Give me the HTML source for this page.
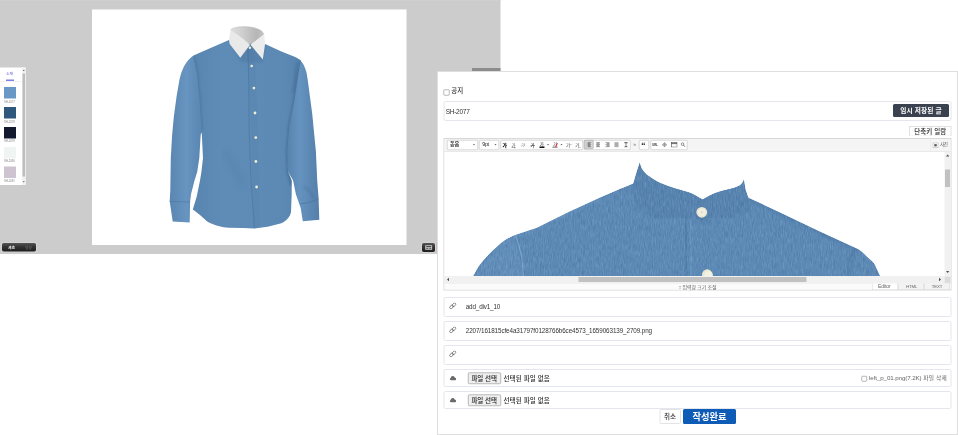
<!DOCTYPE html>
<html lang="ko">
<head>
<meta charset="utf-8">
<title>SH-2077</title>
<style>
html,body{margin:0;padding:0;background:#fff;overflow:hidden}
body{width:958px;height:435px;position:relative}
#s{position:absolute;left:0;top:0;width:1916px;height:870px;transform:scale(.5);transform-origin:0 0;
  font-family:"Liberation Sans","Noto Sans CJK KR",sans-serif;font-size:12px;color:#333;line-height:1}
#s *{box-sizing:border-box}
#s div,#s span,#s svg{position:absolute}
#gray{left:0;top:0;width:1001px;height:508px;background:#ccc;border-top:2px solid #d0d0d0}
#frame{left:183.5px;top:18.5px;width:629.5px;height:471.5px;background:#fff}
#shirt{left:184px;top:18px;width:629px;height:472px}
/* swatch panel */
#sw{left:0;top:135px;width:51px;height:235px;background:#fff}
#sw .t{left:12px;font-size:7.8px;color:#6464e0;white-space:nowrap;top:8.5px}
#sw .u{left:12px;top:24px;width:16px;height:3px;background:#8080e6}
#sw .l{left:0;top:27px;width:44px;height:1px;background:#e2e2e2}
#sw .c{left:8px;width:24px;height:23px}
#sw .n{left:8px;font-size:5.6px;color:#888;white-space:nowrap;letter-spacing:-.1px}
#sw .sb{left:44px;top:0;width:7px;height:235px;background:#f1f1f1}
#sw .th{left:45px;top:12px;width:5px;height:206px;background:#bdbdbd}
/* dark buttons */
.dk{background:linear-gradient(#555,#333 45%,#1e1e1e);border-radius:3.5px;box-shadow:0 0 0 1.5px rgba(255,255,255,.22)}
#b1{left:4px;top:486px;width:68px;height:17px}
#b1 span{font-size:7.5px;font-weight:bold;top:4.5px;white-space:nowrap}
#b2{left:843.5px;top:485.5px;width:26.5px;height:18px}
#bar{left:944px;top:136px;width:57px;height:7px;background:#8c8c8c}
#red{left:873px;top:486px;width:1.5px;height:17px;background:#d9a0a0}
/* panel */
#panel{left:874px;top:142px;width:1042px;height:728px;background:#fff;border:2px solid #dedede}
#pc{left:0;top:0;width:1916px;height:870px}
.tx{white-space:nowrap;color:#333}
.cb{width:12px;height:12px;border:1.7px solid #707070;border-radius:2.2px;background:#fff}
.k{font-weight:500;color:#2a2a2a}
.box{left:887px;width:1016px;border:2px solid #e3e6ec;border-radius:4px;background:#fff}
#tmp{left:1786px;top:208px;width:112px;height:26px;background:#3a414f;border-radius:3px}
#tmp span{left:0;width:112px;text-align:center;top:5.5px;font-size:13.4px;font-weight:bold;color:#fff;white-space:nowrap;letter-spacing:.2px}
#sk{left:1818px;top:251.5px;width:85px;height:20.5px;overflow:hidden;border:2px solid #e2e2e2;border-bottom:1px solid #eee;background:#fff}
#sk span{left:0;width:81px;text-align:center;top:3px;font-size:13px;color:#222;white-space:nowrap;letter-spacing:.1px;font-weight:500}
#ed{left:886.5px;top:275.5px;width:1016.5px;height:305px;border:2px solid #d8d8d8;background:#fff}
#tb{left:0;top:0;width:1012.5px;height:26px;background:#f5f5f5;border-bottom:1.5px solid #dcdcdc}
#tb .sel,#tb .grp{top:2.5px;height:19.5px;border:1.4px solid #b6b6b6;border-radius:2px;background:#fff}
#tb .sel span{font-size:10.5px;color:#222;font-weight:500;white-space:nowrap;letter-spacing:-.5px}
#tb i{top:7px;width:0;height:0;border-left:2.5px solid transparent;border-right:2.5px solid transparent;border-top:3px solid #666;position:absolute}
#tb .grp b{top:4.5px;font-weight:normal;font-size:9px;color:#222;width:16px;text-align:center;white-space:nowrap;position:absolute;line-height:1}
#tb .grp b sup,#tb .grp b sub{font-size:5px;line-height:0}
#tb .grp u{position:absolute;top:12px;width:10px;height:3.4px}
#tb .grp em{position:absolute;left:110px;top:5px;width:2px;height:8px;background:#d22;transform:rotate(28deg)}
#tb .grp .on{background:#d4d4d4;border:1.4px solid #9a9a9a;border-radius:2px}
#tb .al{top:3px;width:10px;height:11px}
#ct{left:0;top:26px;width:1000px;height:249.5px;background:#fff;overflow:hidden}
#eshirt{left:0;top:0;width:1000px;height:249px}
#vs{left:1000px;top:26px;width:12.5px;height:249.5px;background:#f1f1f1}
#hs{left:0;top:274.5px;width:1000px;height:14px;background:#f1f1f1}
#vs .th,#hs .th{background:#c1c1c1}
#cn{left:1000px;top:275px;width:12.5px;height:14px;background:#dcdcdc}
#rs{left:0;top:289px;width:1012.5px;height:12.5px;background:#fbfbfb;border-top:1px solid #e4e4e4}
#rs .tab{top:-.5px;height:12.5px;border:1.5px solid #d5d5d5;border-top:none;background:#f3f3f3}
#rs .tab span{top:1.5px;font-size:9px;color:#666;white-space:nowrap;letter-spacing:-.2px}
.lk{left:897.5px;width:15px;height:13.4px}
.fb{left:935.5px;width:66.5px;height:22.5px;border:1.5px solid #7d7d7d;border-radius:3px;background:#efefef}
.fb span{left:0;width:63.5px;text-align:center;top:3.5px;font-size:13px;color:#111;white-space:nowrap;letter-spacing:-.1px;font-weight:500}
#cancel{left:1318.5px;top:817.5px;width:43px;height:30px;border:2px solid #e4e4e4;border-radius:3px;background:#fff}
#cancel span{left:0;width:39px;text-align:center;top:6px;font-size:13px;color:#333;white-space:nowrap;letter-spacing:-.1px;font-weight:500}
#done{left:1366px;top:817.5px;width:106px;height:30px;background:#0f5cb6;border-radius:3px}
#done span{left:0;width:106px;text-align:center;top:6.5px;font-size:18.5px;font-weight:bold;color:#fff;white-space:nowrap;letter-spacing:-.1px}

</style>
</head>
<body>
<div id="s">
<div id="gray"></div>
<div id="frame"></div>
<svg id="shirt" viewBox="92 8.5 314.5 236" preserveAspectRatio="none">
<defs>
  <linearGradient id="gT" x1="0" y1="0" x2="1" y2="0">
    <stop offset="0" stop-color="#5885af"/><stop offset=".25" stop-color="#5e8cb7"/><stop offset=".62" stop-color="#5d8bb6"/><stop offset=".85" stop-color="#5b89b4"/><stop offset="1" stop-color="#5884ae"/>
  </linearGradient>
  <linearGradient id="gL" x1="0" y1="0" x2="1" y2="0">
    <stop offset="0" stop-color="#5a86b1"/><stop offset=".5" stop-color="#6794c0"/><stop offset="1" stop-color="#5885b0"/>
  </linearGradient>
  <linearGradient id="gR" x1="0" y1="0" x2="1" y2="0">
    <stop offset="0" stop-color="#5582ac"/><stop offset=".4" stop-color="#6593bf"/><stop offset="1" stop-color="#547faa"/>
  </linearGradient>
  <linearGradient id="gC" x1="0" y1="0" x2="1" y2="0">
    <stop offset="0" stop-color="#dedede"/><stop offset=".35" stop-color="#cfcfcf"/><stop offset=".78" stop-color="#b6b6b6"/><stop offset="1" stop-color="#c4c4c4"/>
  </linearGradient>
  <filter id="bl1" x="-20%" y="-20%" width="140%" height="140%"><feGaussianBlur stdDeviation="1.2"/></filter>
  <filter id="bl2" x="-20%" y="-20%" width="140%" height="140%"><feGaussianBlur stdDeviation="2.5"/></filter>
  <clipPath id="cpT"><path id="pT" d="M229,39.5 L215.2,45.5 L201.4,51.4 L193.1,55.2 L197.2,75 L199.3,95.7 L200.7,116.4 L201.6,130 L203,157.6 L201.4,171.4 L200,180 L196.6,196.6 L192.8,209 C197,212 203,217 206.9,220.7 C212,224 220,226.5 229,227.2 L242.8,227.6 L254.5,228 L267.6,226.2 L281.4,222.8 C287,220 290,216 291,211.7 L291.7,193.8 L291.7,180 L288.1,171.2 L287.3,151 L289.4,125.6 L294.4,100.3 L298.2,75 L300.7,60 L295.2,56.6 L281.4,51 L265.1,43.4 L250,40 Z"/></clipPath>
</defs>
<!-- left sleeve -->
<path d="M193.1,55.2 C186.2,60.7 182.1,66.9 179.3,80 L176.6,95.7 L173.8,116.4 L172.1,135 L170.8,157.6 L170.3,190 L169.7,200.7 L172.7,221.1 L189.7,222.1 L190.1,201.4 L191,193.8 L194.5,180 L197.2,171.4 L199.3,157.6 L200.7,134 L203,130 L202,95 L199,60 Z" fill="url(#gL)"/>
<path d="M169.7,200.9 L190.1,201.6" stroke="#4f769d" stroke-width=".6" fill="none"/>
<!-- right sleeve -->
<path d="M296,56.9 C301,59 304.5,64 306.5,72 L307.8,80 L312.2,113 L315.9,151 L317.2,180 L318.6,197.9 L319.3,219.3 L302.8,220.7 L300.7,207.6 L295.9,193.8 L293.1,180 L288.1,171.2 L286,151 L288,125.6 L293,100.3 L296,75 Z" fill="url(#gR)"/>
<path d="M300.3,203 C306,203.5 313,201 318.6,198.2" stroke="#4a7098" stroke-width=".6" fill="none"/>
<path d="M304,186 C308,188 312,193 314,199" stroke="#4a7098" stroke-width="2.2" fill="none" opacity=".45" filter="url(#bl1)"/>
<!-- torso -->
<use href="#pT" fill="url(#gT)"/>
<g clip-path="url(#cpT)">
  <path d="M193.1,55.2 L197.2,75 L199.3,95.7 L200.7,116.4 L201.6,130" stroke="#456b93" stroke-width="2.4" fill="none" opacity=".55" filter="url(#bl1)"/>
  <path d="M300.7,60 L298.2,75 L294.4,100.3 L289.4,125.6 L287.3,151 L288.1,171.2 L291.7,185" stroke="#40658c" stroke-width="3" fill="none" opacity=".6" filter="url(#bl1)"/>
  <path d="M250,46 L252,70 L254,112 L255.5,160 L256.5,228" stroke="#4f769d" stroke-width="7" fill="none" opacity=".1"/>
  <path d="M247.8,44 L248.6,75 L249.2,130 L251,180 L254.5,228" stroke="#486e96" stroke-width=".7" fill="none" opacity=".7"/>
  <path d="M225,150 C232,165 238,175 244,185" stroke="#4b7199" stroke-width="8" fill="none" opacity=".12" filter="url(#bl2)"/>
  <path d="M297,62 C295,72 296,82 292,92" stroke="#3f648b" stroke-width="2" fill="none" opacity=".45" filter="url(#bl1)"/>
  <path d="M232,44 L241,62 L262,62 L266,44Z" fill="#3d628a" opacity=".22" filter="url(#bl1)"/>
</g>
<!-- collar -->
<path d="M230.6,29.3 C233.5,26.7 239,26.1 245,26.1 C252,26.2 259,28.2 262.1,31 L264.1,33.8 L253,43 L249.9,43.4 L247.5,42.5 Z" fill="url(#gC)" stroke="#b4b4b4" stroke-width=".35"/>
<path d="M230.6,29.2 C235.5,32.6 243,38 248.3,42.6 L249.9,44.5 L240.3,57.2 L229.7,43.4 L229,39.3 Z" fill="#e9e9e9"/>
<path d="M264.1,33.6 L265.1,43.4 L262.8,58.9 L250.5,44.3 L252.5,42.6 C256,40 261,36.5 264.1,33.6 Z" fill="#ececec"/>
<!-- buttons -->
<g fill="#f1ecd2">
<circle cx="249.9" cy="47.3" r="1.25"/><circle cx="251.7" cy="65.5" r="1.3"/><circle cx="253.9" cy="87.6" r="1.35"/><circle cx="255" cy="112.5" r="1.4"/><circle cx="255.8" cy="137.1" r="1.4"/><circle cx="255.9" cy="161" r="1.4"/><circle cx="256.6" cy="186.5" r="1.4"/>
</g>

</svg>
<div id="sw">
  <span class="t">소재</span><div class="u"></div><div class="l"></div>
  <div class="c" style="top:39px;background:#6a98c6"></div><span class="n" style="top:66px">SH-2077</span>
  <div class="c" style="top:79px;background:#2f587c"></div><span class="n" style="top:105.5px">SH-2078</span>
  <div class="c" style="top:118.5px;background:#131a30"></div><span class="n" style="top:145px">SH-2079</span>
  <div class="c" style="top:158.5px;background:#f0f5f3"></div><span class="n" style="top:185px">SH-2080</span>
  <div class="c" style="top:198px;background:#cdc3d1"></div><span class="n" style="top:224.5px">SH-2081</span>
  <div class="sb"></div><div class="th"></div>
  <svg style="left:44px;top:2px;width:7px;height:7px" viewBox="0 0 7 7"><path d="M1.5 4.8L3.5 2.4L5.5 4.8Z" fill="#555"/></svg>
  <svg style="left:44px;top:225px;width:7px;height:7px" viewBox="0 0 7 7"><path d="M1.5 2.4L3.5 4.8L5.5 2.4Z" fill="#555"/></svg>
</div>
<div id="b1" class="dk"><span style="left:12px;color:#fff">셔츠</span><span style="left:46px;color:#5e5e5e">정장</span></div>
<div id="b2" class="dk"><svg style="left:6px;top:4px;width:15px;height:10px" viewBox="0 0 15 10"><rect x=".5" y=".5" width="14" height="9" rx="1" fill="#cfcfcf"/><rect x="2.5" y="2.2" width="10" height="2" fill="#3a3a3a"/><rect x="2.5" y="5.6" width="4" height="2.2" fill="#555"/><rect x="8.5" y="5.6" width="4" height="2.2" fill="#555"/></svg></div>
<div id="bar"></div>
<div id="red"></div>
<div id="panel"></div>
<div id="pc">
<div class="cb" style="left:886.5px;top:179px"></div>
<span class="tx k" style="left:902.5px;top:174px;font-size:13px;letter-spacing:-.2px">공지</span>
<div class="box" style="top:202px;height:40px"></div>
<span class="tx" style="left:891.5px;top:217px;font-size:13px;letter-spacing:-.55px">SH-2077</span>
<div id="tmp"><span>임시 저장된 글</span></div>
<div id="sk"><span>단축키 일람</span></div>
<!-- editor -->
<div id="ed">
  <div id="tb">
    <div class="sel" style="left:5.5px;width:61.5px"><span style="left:5px;top:2px">돋움</span><i style="left:51px"></i></div>
    <div class="sel" style="left:69px;width:40.5px"><span style="left:6px;top:1.5px">9pt</span><i style="left:30.5px"></i></div>
    <div class="grp" style="left:112.5px;width:165px">
      <b style="left:-.8px;font-weight:900;color:#000;font-size:9.5px">가</b><b style="left:17.2px;text-decoration:underline;color:#555">가</b><b style="left:36.4px;transform:skewX(-14deg);color:#666">가</b><b style="left:55.2px;text-decoration:line-through;color:#333;font-weight:500">가</b>
      <b style="left:73.6px;top:2.5px;color:#222">가</b><u style="left:76.5px;background:#111"></u><i style="left:91.7px"></i>
      <b style="left:100.2px;top:2.5px;color:#444">가</b><u style="left:103px;background:#999"></u><em></em><i style="left:119.3px"></i>
      <b style="left:127.6px;color:#444">가<sup>1</sup></b><b style="left:145.8px;color:#444">가<sub>1</sub></b>
    </div>
    <div class="grp" style="left:279px;width:93px">
      <div class="on" style="left:-1px;top:-1px;width:19px;height:18px"></div>
      <svg class="al" style="left:4px" viewBox="0 0 10 11"><path d="M1 .5V10.5" stroke="#777" stroke-width="1.2"/><path d="M3 1.5H9M3 3.5H7M3 5.5H9M3 7.5H7M3 9.5H9" stroke="#444" stroke-width="1.2"/></svg>
      <svg class="al" style="left:22.5px" viewBox="0 0 10 11"><path d="M1 1.5H9M2.5 3.5H7.5M1 5.5H9M2.5 7.5H7.5M1 9.5H9" stroke="#444" stroke-width="1.2"/></svg>
      <svg class="al" style="left:41px" viewBox="0 0 10 11"><path d="M1 1.5H9M4 3.5H9M1 5.5H9M4 7.5H9M1 9.5H9" stroke="#444" stroke-width="1.2"/></svg>
      <svg class="al" style="left:59.5px" viewBox="0 0 10 11"><path d="M1 1.5H9M1 3.5H9M1 5.5H9M1 7.5H9M1 9.5H9" stroke="#666" stroke-width="1.2"/></svg>
      <svg class="al" style="left:78px" viewBox="0 0 10 11"><path d="M1.5 1H8.5M1.5 10H8.5M5 1V10" stroke="#444" stroke-width="1.3" fill="none"/><path d="M3 3.2L5 1.2L7 3.2M3 7.8L5 9.8L7 7.8" stroke="#444" stroke-width="1" fill="none"/></svg>
    </div>
    <span style="left:378px;top:6px;font-size:10px;color:#777">»</span>
    <div class="grp" style="left:389.5px;width:19.5px"><span style="left:3.5px;top:0;font-size:17px;font-weight:bold;color:#222;font-family:'Liberation Serif',serif;line-height:20px">“</span></div>
    <div class="grp" style="left:412.5px;width:74px">
      <span style="left:2.5px;top:6px;font-size:5.5px;font-weight:bold;color:#333;letter-spacing:-.2px">URL</span>
      <svg class="al" style="left:22px" viewBox="0 0 10 11"><circle cx="5" cy="5.5" r="3.2" fill="none" stroke="#666" stroke-width="1"/><path d="M5 .8V10.2M.3 5.5H9.7" stroke="#666" stroke-width="1"/></svg>
      <svg class="al" style="left:40px;width:13px" viewBox="0 0 13 11"><rect x=".8" y=".8" width="11.4" height="9.4" fill="#fff" stroke="#444" stroke-width="1.2"/><path d="M.8 3.2H12.2" stroke="#444" stroke-width="1.6"/></svg>
      <svg class="al" style="left:59px" viewBox="0 0 10 11"><circle cx="4" cy="4.2" r="2.7" fill="none" stroke="#555" stroke-width="1.3"/><path d="M6 6.3L9 9.6" stroke="#555" stroke-width="1.6"/></svg>
    </div>
    <div style="left:971px;top:0;width:1px;height:25px;background:#e6e6e6"></div>
    <svg style="left:976px;top:7px;width:12px;height:11px" viewBox="0 0 12 11"><rect x=".6" y=".6" width="10.8" height="9.8" rx="1" fill="#fff" stroke="#999" stroke-width="1.1"/><rect x="3.5" y="3.3" width="5" height="4.4" fill="#555"/></svg>
    <span style="left:991.5px;top:7.5px;font-size:9px;color:#555;letter-spacing:-.6px">사진</span>
  </div>
  <div id="ct">
    <svg id="eshirt" viewBox="444.3 151.4 500 124.5" preserveAspectRatio="none">
<defs>
  <filter id="dn" x="0" y="0" width="100%" height="100%" color-interpolation-filters="sRGB">
    <feTurbulence type="fractalNoise" baseFrequency="0.9 0.16" numOctaves="2" seed="7" result="n"/>
    <feColorMatrix in="n" type="matrix" values="0 0 0 0 0  0 0 0 0 0  0 0 0 0 0  0.6 0 0 0 -0.27" result="a"/>
    <feFlood flood-color="#9dc0e2"/><feComposite in2="a" operator="in" result="light"/>
    <feColorMatrix in="n" type="matrix" values="0 0 0 0 0  0 0 0 0 0  0 0 0 0 0  0 0.7 0 0 -0.3" result="b"/>
    <feFlood flood-color="#345d88"/><feComposite in2="b" operator="in" result="dark"/>
    <feMerge><feMergeNode in="SourceGraphic"/><feMergeNode in="light"/><feMergeNode in="dark"/></feMerge>
    <feComposite in2="SourceGraphic" operator="in"/>
  </filter>
  <filter id="eb1" x="-10%" y="-30%" width="120%" height="160%"><feGaussianBlur stdDeviation="1.6"/></filter>
  <filter id="eb2" x="-10%" y="-30%" width="120%" height="160%"><feGaussianBlur stdDeviation="4"/></filter>
  <clipPath id="ecp"><path id="eP" d="M472.3,276.5 L478.2,265.8 C484,258 491,251 497.9,244.9 C503,240 509,236.5 514.6,234.3 L536.5,227.2 L568.7,211.1 L600.9,196.3 L618.8,188.6 L632.9,183 L636.6,170.3 L639.5,161.4 C640.5,165  641.3,167.3 642.3,168.9 C644,171.5 646.2,173.6 648.9,175.5 C652,178 656,180.3 660.1,182.1 C665,184.3 670,186.2 675.2,187.7 L688.3,191.5 C691,192.5 693.5,193.6 695.8,194.8 L702.4,198.7 L709,194.8 C712.5,193.2 716.2,191.8 720.3,190.5 L731.5,187.7 C734.5,186.9 737,186 739,184.9 C741,183.7 742.6,181.5 743.7,178.4 L745.6,189.6 L748.4,197.1 L780,211.8 L818.7,230.4 L857.3,248.1 C860,249.5 862,251 863.7,253 C868,257 871.5,260 874,262.6 L880.5,276.5 Z"/></clipPath>
</defs>
<g filter="url(#dn)">
  <use href="#eP" fill="#5d8ab6"/>
  <g clip-path="url(#ecp)">
    <path d="M632.9,183 L636.6,170.8 L639.5,162.6 C644,172 650,178 660.1,182.1 C675,188 690,191 702.4,198.7 C712,192 730,189 739,184.9 L743.7,179.6 L748.4,197.1 C752,207 748,214 735,217.5 L656,217.5 C640,214 630,200 632.9,183Z" fill="#3f6a97" opacity=".16"/>
    <path d="M656,218.3 L735,218.3" stroke="#3b6491" stroke-width="2" opacity=".4" filter="url(#eb1)"/>
    <path d="M685.5,216 L686,277" stroke="#3b6592" stroke-width="7" opacity=".3" filter="url(#eb1)"/>
    <path d="M690.5,218 L690.8,277" stroke="#7aa6d0" stroke-width="1.2" opacity=".5"/>
    <path d="M600.9,196.3 L568.7,211.1 L536.5,227.2 L514.6,234.3" stroke="#7ba7d1" stroke-width="5" opacity=".25" filter="url(#eb1)"/>
    <path d="M514.6,234.3 C520,245 523,262 523,277" stroke="#8fb6da" stroke-width="1.5" fill="none" opacity=".5"/>
    <path d="M473,277 L497.9,244.9 L514.6,234.3 L523,277Z" fill="#6f9cc8" opacity=".3"/>
    <path d="M857.3,248.1 C850,256 847,268 848,277" stroke="#3b6491" stroke-width="3" fill="none" opacity=".3" filter="url(#eb1)"/>
    <path d="M748.4,197.1 L818.7,230.4 L857.3,248.1" stroke="#416c99" stroke-width="6" opacity=".25" filter="url(#eb1)"/>
  </g>
</g>
<ellipse cx="701.6" cy="212.6" rx="5.6" ry="1.6" fill="#33577d" opacity=".35" transform="translate(.6 4.8)" filter="url(#eb1)"/>
<circle cx="701.6" cy="211.7" r="5.4" fill="#e9e7d3"/>
<circle cx="701.6" cy="211.7" r="3.7" fill="#f1efdf"/>
<circle cx="701.6" cy="211.7" r="1" fill="#d9d6bf"/>
<ellipse cx="707.2" cy="274.3" rx="5.3" ry="5.6" fill="#eceAD6" transform="rotate(-20 707.2 274.3)"/>
<ellipse cx="708.2" cy="275.3" rx="3.8" ry="4.2" fill="#f3f1e2" transform="rotate(-20 707.2 274.3)"/>

    

    </svg>
  </div>
  <div id="vs"><div class="th" style="left:1.5px;top:35px;width:10px;height:35px"></div>
    <svg style="left:0;top:2px;width:12.5px;height:10px" viewBox="0 0 12.5 10"><path d="M3 7L6.25 3L9.5 7Z" fill="#505050"/></svg>
    <svg style="left:0;top:235px;width:12.5px;height:10px" viewBox="0 0 12.5 10"><path d="M3 3L6.25 7L9.5 3Z" fill="#505050"/></svg>
  </div>
  <div id="hs"><div class="th" style="left:268.5px;top:1.5px;width:456px;height:10.5px"></div>
    <svg style="left:2px;top:0;width:10px;height:14px" viewBox="0 0 10 14"><path d="M7 3.5L3 7L7 10.5Z" fill="#505050"/></svg>
    <svg style="left:986px;top:0;width:10px;height:14px" viewBox="0 0 10 14"><path d="M3 3.5L7 7L3 10.5Z" fill="#505050"/></svg>
  </div>
  <div id="cn"></div>
  <div id="rs"><span style="left:469px;top:2.5px;font-size:10px;color:#666;white-space:nowrap;letter-spacing:-.2px">↕ 입력창 크기 조절</span>
    <div class="tab" style="left:855px;width:52.5px;background:#fff"><span style="left:11.5px;font-size:10px;top:.5px">Editor</span></div>
    <div class="tab" style="left:908px;width:50.5px"><span style="left:14.5px;font-size:8.6px;top:1.5px">HTML</span></div>
    <div class="tab" style="left:959px;width:52px"><span style="left:15px;font-size:8.6px;top:1.5px">TEXT</span></div>
  </div>
</div>
<!-- rows -->
<div class="box" style="top:594px;height:40px"></div>
<div class="box" style="top:642px;height:40px"></div>
<div class="box" style="top:690px;height:40px"></div>
<div class="box" style="top:738px;height:36px"></div>
<div class="box" style="top:782px;height:36px"></div>
<svg class="lk" style="top:605px" viewBox="0 0 15 13.4"><use href="#lnk"/></svg>
<svg class="lk" style="top:653px" viewBox="0 0 15 13.4"><use href="#lnk"/></svg>
<svg class="lk" style="top:701px" viewBox="0 0 15 13.4"><use href="#lnk"/></svg>
<svg style="left:0;top:0;width:0;height:0"><defs><g id="lnk" fill="none" stroke="#5a5a5a" stroke-width="1.35" transform="translate(7.5 6.7) rotate(-40)"><rect x="-7.3" y="-2.5" width="8.2" height="5" rx="2.5"/><rect x="-.9" y="-2.5" width="8.2" height="5" rx="2.5"/></g>
<path id="cld" d="M3.2 9.5C1.6 9.5 .5 8.5 .5 7.1C.5 5.9 1.4 5 2.5 4.8C2.7 2.7 4.4 1.2 6.5 1.2C8.3 1.2 9.8 2.3 10.3 3.9C12 4 13.3 5.2 13.3 6.8C13.3 8.3 12.1 9.5 10.6 9.5Z" fill="#6a6a6a"/></defs></svg>
<svg class="lk" style="top:751px;left:898.5px;width:14px;height:11px" viewBox="0 0 14 11"><use href="#cld"/></svg>
<svg class="lk" style="top:795px;left:898.5px;width:14px;height:11px" viewBox="0 0 14 11"><use href="#cld"/></svg>
<span class="tx" style="left:931.5px;top:607.5px;font-size:12.6px;letter-spacing:-.3px">add_div1_10</span>
<span class="tx" style="left:931.5px;top:655.5px;font-size:12.6px;letter-spacing:-.2px">2207/161815cfe4a31797f0128766b6ce4573_1659063139_2709.png</span>
<div class="fb" style="top:745px"><span>파일 선택</span></div>
<span class="tx k" style="left:1007px;top:750.5px;font-size:13px;letter-spacing:.2px">선택된 파일 없음</span>
<div class="fb" style="top:789px"><span>파일 선택</span></div>
<span class="tx k" style="left:1007px;top:794.5px;font-size:13px;letter-spacing:.2px">선택된 파일 없음</span>
<div class="cb" style="left:1722.5px;top:751.5px;width:11.5px;height:11.5px"></div>
<span class="tx" style="left:1738px;top:749.5px;font-size:12.4px;letter-spacing:-.2px;color:#666">left_p_01.png(7.2K) <span style="position:static;font-size:11.4px;letter-spacing:.55px">파일 삭제</span></span>
<div id="cancel"><span>취소</span></div>
<div id="done"><span>작성완료</span></div>
</div>


</div>
</body>
</html>
